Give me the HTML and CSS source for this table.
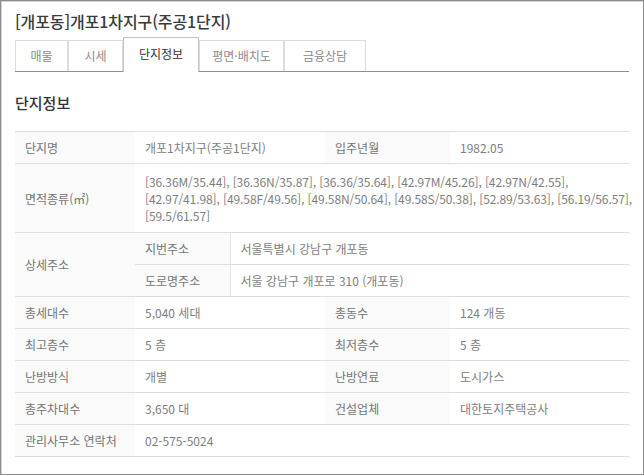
FILE: index.html
```html
<!DOCTYPE html>
<html lang="ko">
<head>
<meta charset="utf-8">
<link rel="stylesheet" href="styles.css">
</head>
<body>
<div class="frame">
  <h1 class="title">[개포동]개포1차지구(주공1단지)</h1>
  <ul class="tabs">
    <li class="tab t1">매물</li>
    <li class="tab t2">시세</li>
    <li class="tab t3 active">단지정보</li>
    <li class="tab t4">평면·배치도</li>
    <li class="tab t5">금융상담</li>
  </ul>
  <h2 class="section">단지정보</h2>
  <table class="info">
    <colgroup>
      <col class="c1"><col class="c2"><col class="c3"><col class="c4"><col class="c5">
    </colgroup>
    <tr>
      <th>단지명</th>
      <td colspan="2">개포1차지구(주공1단지)</td>
      <th>입주년월</th>
      <td>1982.05</td>
    </tr>
    <tr class="multi">
      <th>면적종류(㎡)</th>
      <td colspan="4">[36.36M/35.44], [36.36N/35.87], [36.36/35.64], [42.97M/45.26], [42.97N/42.55],<br>[42.97/41.98], [49.58F/49.56], [49.58N/50.64], [49.58S/50.38], [52.89/53.63], [56.19/56.57],<br>[59.5/61.57]</td>
    </tr>
    <tr>
      <th rowspan="2">상세주소</th>
      <th class="sub">지번주소</th>
      <td colspan="3" class="subval">서울특별시 강남구 개포동</td>
    </tr>
    <tr>
      <th class="sub">도로명주소</th>
      <td colspan="3" class="subval">서울 강남구 개포로 310 (개포동)</td>
    </tr>
    <tr>
      <th>총세대수</th>
      <td colspan="2">5,040 세대</td>
      <th>총동수</th>
      <td>124 개동</td>
    </tr>
    <tr>
      <th>최고층수</th>
      <td colspan="2">5 층</td>
      <th>최저층수</th>
      <td>5 층</td>
    </tr>
    <tr>
      <th>난방방식</th>
      <td colspan="2">개별</td>
      <th>난방연료</th>
      <td>도시가스</td>
    </tr>
    <tr>
      <th>총주차대수</th>
      <td colspan="2">3,650 대</td>
      <th>건설업체</th>
      <td>대한토지주택공사</td>
    </tr>
    <tr>
      <th>관리사무소 연락처</th>
      <td colspan="2">02-575-5024</td>
      <td></td>
      <td></td>
    </tr>
  </table>
</div>
</body>
</html>
```

FILE: styles.css
```css
* { box-sizing: border-box; }
html, body { margin: 0; padding: 0; background: #fff; }
body {
  font-family: "Noto Sans CJK KR", "Noto Sans", sans-serif;
  color: #666;
}
.frame {
  width: 644px;
  height: 475px;
  border: 1px solid #8c8c8c;
  box-shadow: inset 1px 1px 0 #d4d4d4;
  padding: 9px 14px 0 14px;
  overflow: hidden;
}
.title {
  margin: 0;
  font-size: 16px;
  line-height: 22px;
  font-weight: 500;
  color: #3a3a3a;
  letter-spacing: -0.1px;
}
.tabs {
  list-style: none;
  margin: 6px 0 0 0;
  padding: 0;
  display: flex;
  align-items: flex-end;
  height: 34px;
  border-bottom: 1px solid #8f8f8f;
}
.tab {
  height: 31px;
  border: 1px solid #dcdcdc;
  border-bottom: none;
  font-size: 12px;
  line-height: 30px;
  text-align: center;
  color: #8a8a8a;
  background: #fff;
}
.tab.active {
  line-height: 32px;
  color: #333;
  border-color: #c4c4c4;
  margin-bottom: -1px;
  height: 35px;
}
.t1 { width: 53px; }
.t2 { width: 55px; }
.t3 { width: 76px; }
.t4 { width: 85px; }
.t5 { width: 82px; }
.section {
  margin: 21px 0 0 0;
  font-size: 15px;
  line-height: 20px;
  font-weight: 500;
  color: #333;
}
.info {
  margin-top: 18px;
  width: 614px;
  border-collapse: collapse;
  table-layout: fixed;
  font-size: 12px;
  border-top: 1px solid #dddddd;
}
.c1 { width: 120px; }
.c2 { width: 95px; }
.c3 { width: 95px; }
.c4 { width: 125px; }
.c5 { width: 179px; }
.info th, .info td {
  height: 32px;
  padding: 0 10px;
  border-bottom: 1px solid #dedede;
  text-align: left;
  font-weight: normal;
  vertical-align: middle;
  white-space: nowrap;
}
.info th {
  background: #fafafa;
  color: #747474;
}
.info td {
  color: #7e7e7e;
  background: #fff;
}
.info .multi td, .info .multi th {
  height: 69px;
  line-height: 17px;
  padding-top: 8px;
  padding-bottom: 8px;
}
.info .multi td {
  letter-spacing: -0.1px;
}
.info th.sub {
  border-right: 1px solid #e4e4e4;
}
```
